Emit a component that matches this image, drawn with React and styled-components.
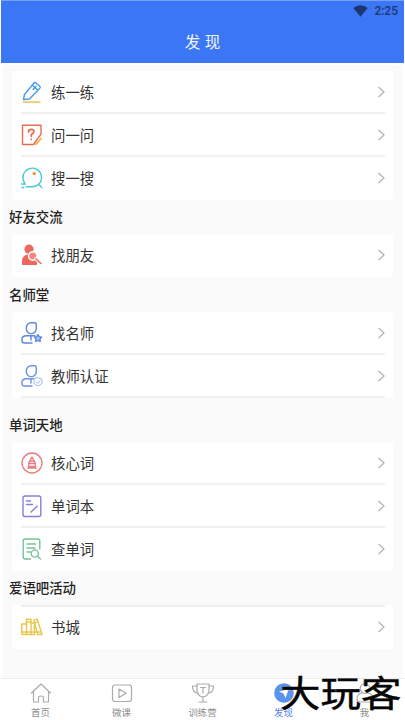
import React from 'react';
import styled, { createGlobalStyle } from 'styled-components';

const GlobalStyle = createGlobalStyle`
  * {
    box-sizing: border-box;
  }
  body {
    margin: 0;
    background: #fff;
    font-family: "Noto Sans CJK SC", "Noto Sans", sans-serif;
  }
`;
const Screen = styled.div`
  position: relative;
  display: flex;
  flex-direction: column;
  width: 405px;
  height: 720px;
  overflow: hidden;
  background: #fff;
`;
const Header = styled.header`
  height: 63px;
  flex: none;
  margin: 0 1px;
  border-top: 1px solid #76a0fa;
  background: #3b76f4;
`;
const StatusBar = styled.div`
  display: flex;
  align-items: center;
  justify-content: flex-end;
  gap: 6px;
  height: 20px;
  padding-right: 6px;
  color: #1c3672;
  font: 500 12px/20px Roboto, sans-serif;
`;
const Title = styled.h1`
  margin: 8px 0 0;
  color: #f3f7ff;
  font-size: 15.5px;
  font-weight: 400;
  line-height: 24px;
  text-align: center;
  word-spacing: 1px;
`;
const Content = styled.main`
  flex: 1;
  margin: 2px 3px 0;
  padding: 6px 9px 0;
  background: #fafafa;
`;
const Card = styled.section`
  border-radius: 3px;
  background: #fff;
`;
const Heading = styled.h2`
  display: flex;
  align-items: center;
  height: ${(p) => p.$height}px;
  margin: 0 0 0 -3px;
  padding-top: ${(p) => p.$top || 0}px;
  padding-bottom: 2px;
  color: #222;
  font-size: 13.4px;
  font-weight: 500;
  line-height: 20px;
`;
const Row = styled.div`
  display: flex;
  align-items: center;
  height: ${(p) => p.$height || 43}px;
  margin: 0 8px 0 9px;
  border-top: ${(p) => (p.$top ? '2px solid #efefef' : 'none')};
  border-bottom: 2px solid ${(p) => (p.$line ? '#f0f0f0' : 'transparent')};
`;
const RowIcon = styled.svg`
  width: 22px;
  height: 22px;
  flex: none;
  overflow: visible;
  fill: none;
  stroke: ${(p) => p.$color};
  stroke-width: 1.4;
  stroke-linecap: round;
  stroke-linejoin: round;
`;
const Label = styled.span`
  flex: 1;
  margin-left: 8px;
  color: #333;
  font-size: 14.4px;
  line-height: 22px;
`;
const Chevron = styled.svg`
  width: 8px;
  height: 12px;
  fill: none;
  stroke: #b4b4b4;
  stroke-width: 1.3;
`;
const TabBar = styled.nav`
  display: grid;
  grid-template-columns: repeat(5, 1fr);
  height: 42px;
  flex: none;
  border-top: 1px solid #ededed;
  background: #fff;
`;
const Tab = styled.div`
  display: flex;
  flex-direction: column;
  align-items: center;
  padding-top: 2px;
  color: ${(p) => (p.$active ? '#5584e8' : '#8c8c8c')};
  font-size: 9.4px;
  line-height: 14px;
`;
const TabIcon = styled.svg`
  width: 24px;
  height: 24px;
  fill: none;
  stroke: #ababab;
  stroke-width: 1.2;
  stroke-linejoin: round;
  stroke-linecap: round;
`;
const Watermark = styled.div`
  position: absolute;
  left: 280px;
  top: 668px;
  color: #050505;
  font-size: 40.5px;
  font-weight: 400;
  line-height: 48px;
  white-space: nowrap;
  transform: scaleY(0.9);
  -webkit-text-stroke: 0.5px #050505;
  text-shadow: 0 0 1px #fff;
`;

const icons = {
  pencil: ['#4a9be8', <>
    <path d="M2.5 18.5l1-5L12.8 2.2q1-1.2 2.2-.2l3.5 3q1.3 1 .3 2.2L8.5 18z M11.3 4.2l5.4 4.8M12 8.5l3-3.3" />
    <path d="M2.5 21h16.5" stroke="#e5c05b" />
  </>],
  question: ['#ec6b4e', <>
    <path d="M12.5 20.5H1.5V1.2H20v9z" />
    <path d="M7.5 8q0-2.7 2.7-2.7T13 7.6q0 1.7-2.7 2.9v1.7M10.2 15v.3" strokeWidth="1.7" />
    <path d="M14.8 20.3l5.4-5.8" stroke="#eeb44f" strokeWidth="1.7" />
  </>],
  search: ['#43c8d5', <>
    <path d="M3.4 15.5A9.3 9.3 0 1 1 11 19.8H5.5M.8 17h3.6M.8 20.5h2M17.8 17.5l3 3" />
    <circle cx="13.2" cy="6.6" r="1.7" fill="#ee8b40" stroke="none" />
  </>],
  friend: ['#ed685e', <>
    <circle cx="8" cy="5.2" r="4.6" fill="#ed685e" stroke="none" />
    <path d="M1 21v-4q0-5 5-6.5l10 1.5v9z" fill="#ed685e" stroke="none" />
    <circle cx="11.8" cy="12" r="4.2" fill="#f08a81" stroke="#fff" />
    <path d="M15 15l5 4.5" stroke="#fff" strokeWidth="3.5" />
    <path d="M15 15l5 4.5" strokeWidth="1.6" />
  </>],
  teacher: ['#5d86dc', <>
    <path d="M10.5.8h3q1.8 0 1.8 1.8v4a5 5 0 0 1-10 0Q5.3.8 10.5.8zM11 21H3.5Q.8 21 .8 18q0-4.2 4.5-4.2h8.5M10 14v4" />
    <path d="M17 12.5l1.2 2.2 2.5.4-1.8 1.8.4 2.5-2.3-1.1-2.3 1.1.4-2.5-1.8-1.8 2.5-.4z" fill="#b4caff" />
  </>],
  verified: ['#6994e5', <>
    <path d="M10.5.8h3q1.8 0 1.8 1.8v4a5 5 0 0 1-10 0Q5.3.8 10.5.8zM11 21H3.5Q.8 21 .8 18q0-4.2 4.5-4.2h7.5M10 14v4" />
    <path d="M17 12.8l4 1.2v3.5q0 2-4 3.5-4-1.5-4-3.5V14zM15.2 17l1.5 1.5 2.5-2.8" stroke="#9dbdf3" strokeWidth="1" />
  </>],
  core: ['#ea7c80', <>
    <circle cx="11" cy="11" r="10" />
    <path d="M11 5l3.4 6v3.5H7.6V11zM9.2 9h3.6M7.7 11.5h6.6M7 16h8" />
  </>],
  notebook: ['#8280dc', <>
    <rect x="2" y="1" width="17.8" height="20.5" rx="2" />
    <path d="M5.5 6h4M5.5 9.5h6M10 17l6.2-5.7" />
  </>],
  lookup: ['#78c198', <>
    <path d="M9.5 21H4q-1.8 0-1.8-2V2.8Q2.2 1 4 1h13q1.8 0 1.8 1.8V11M6 6h8.5M6 10h8M6 14h3" />
    <circle cx="13.8" cy="15.5" r="3.6" /><path d="M16.5 18l3 3" />
  </>],
  books: ['#e8c74c', <>
    <path d="M.8 8h4.7v10.5H.8zM5.5 3.3h4.5v15.2H5.5zM10 7h3.4v11.5H10zM13 4.2l3.2-1 4.8 15.3h-4.5z" />
    <path d="M.8 16h19M6 6h3.5M14 6.7l3-.9" />
  </>],
};

const Item = ({ icon, text, ...rest }) => {
  const [color, shape] = icons[icon];
  return (
    <Row {...rest}>
      <RowIcon $color={color} viewBox="0 0 22 22">{shape}</RowIcon>
      <Label>{text}</Label>
      <Chevron viewBox="0 0 8 12"><path d="M1.5 1L7 6l-5.5 5" /></Chevron>
    </Row>
  );
};

function App() {
  return (
    <Screen>
      <GlobalStyle />
      <Header>
        <StatusBar>
          <svg width="15" height="12" viewBox="0 0 15 12" fill="#1c3672">
            <path d="M.3 3Q7.5-2.5 14.7 3L7.5 11.7z" />
          </svg>
          <span>2:25</span>
        </StatusBar>
        <Title>发 现</Title>
      </Header>
      <Content>
        <Card>
          <Item icon="pencil" text="练一练" $line />
          <Item icon="question" text="问一问" $line />
          <Item icon="search" text="搜一搜" />
        </Card>
        <Heading $height={34}>好友交流</Heading>
        <Card>
          <Item icon="friend" text="找朋友" />
        </Card>
        <Heading $height={35}>名师堂</Heading>
        <Card>
          <Item icon="teacher" text="找名师" $line />
          <Item icon="verified" text="教师认证" $line />
        </Card>
        <Heading $height={44} $top={10}>单词天地</Heading>
        <Card>
          <Item icon="core" text="核心词" $line />
          <Item icon="notebook" text="单词本" $line />
          <Item icon="lookup" text="查单词" />
        </Card>
        <Heading $height={34}>爱语吧活动</Heading>
        <Card>
          <Item icon="books" text="书城" $top $height={44} />
        </Card>
      </Content>
      <TabBar>
        <Tab>
          <TabIcon viewBox="0 0 24 24">
            <path d="M2.5 12L12 3l9.5 9M4.5 10.5V21h5v-4.5q0-1.5 2.5-1.5t2.5 1.5V21h5V10.5" />
          </TabIcon>
          首页
        </Tab>
        <Tab>
          <TabIcon viewBox="0 0 24 24">
            <rect x="2.5" y="4" width="19" height="16.5" rx="2.5" />
            <path d="M9 8l7 4.2L9 16.5z" />
          </TabIcon>
          微课
        </Tab>
        <Tab>
          <TabIcon viewBox="0 0 24 24">
            <path d="M6 3h12v6q0 6-6 7-6-1-6-7zM6 5H1.5q0 7 5.5 7M18 5h4.5q0 7-5.5 7M12 16v4M8 21h8M9.5 6.5h5M12 6.5V12" />
          </TabIcon>
          训练营
        </Tab>
        <Tab $active>
          <TabIcon viewBox="0 0 24 24">
            <circle cx="12" cy="12" r="9.8" fill="#5a94ed" stroke="none" />
            <path d="M17 7.5L13.5 17l-2-4.5-4.5-1.8z" fill="#fff" stroke="none" />
          </TabIcon>
          发现
        </Tab>
        <Tab>
          <TabIcon viewBox="0 0 24 24">
            <circle cx="12" cy="7.5" r="4.8" />
            <path d="M9 12q-5 1-5 6 0 3 3 3h10q3 0 3-3 0-5-5-6" />
          </TabIcon>
          我
        </Tab>
      </TabBar>
      <Watermark>大玩客</Watermark>
    </Screen>
  );
}

export default App;
